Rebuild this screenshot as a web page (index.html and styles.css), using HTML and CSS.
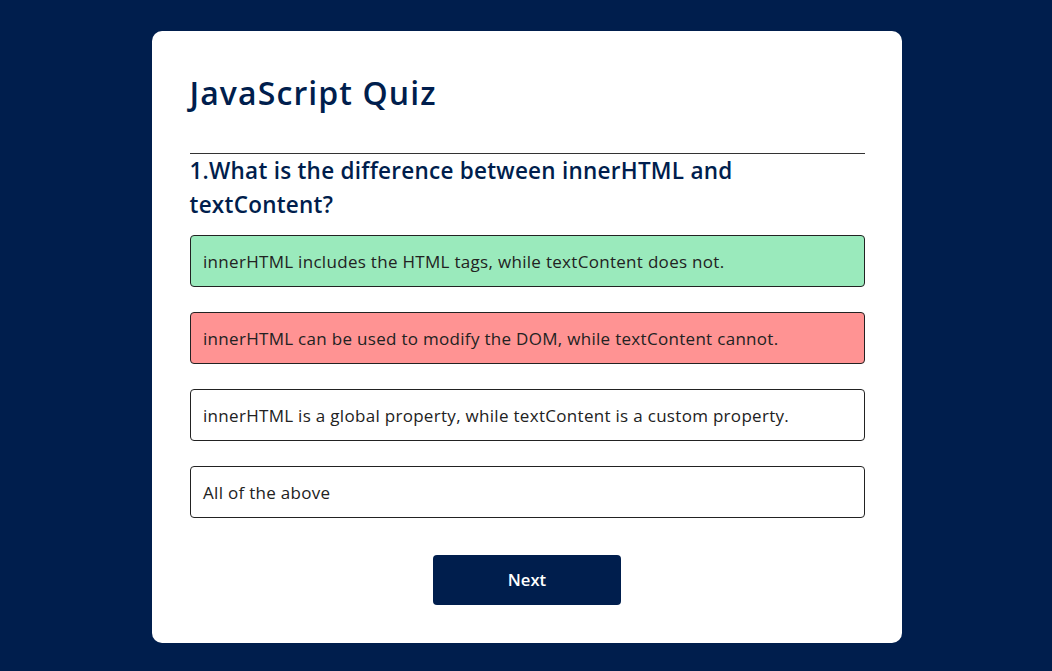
FILE: index.html
```html
<!DOCTYPE html>
<html lang="en">
<head>
<meta charset="utf-8">
<title>JavaScript Quiz</title>
<link rel="stylesheet" href="styles.css">
</head>
<body>
<div class="app">
  <h1 class="title">JavaScript Quiz</h1>
  <div class="quiz">
    <h2 class="question">1.What is the difference between innerHTML and textContent?</h2>
    <div class="answers">
      <button class="btn correct">innerHTML includes the HTML tags, while textContent does not.</button>
      <button class="btn incorrect">innerHTML can be used to modify the DOM, while textContent cannot.</button>
      <button class="btn">innerHTML is a global property, while textContent is a custom property.</button>
      <button class="btn">All of the above</button>
    </div>
    <button class="next-btn">Next</button>
  </div>
</div>
</body>
</html>
```
FILE: styles.css
```css
* { box-sizing: border-box; }
body {
  margin: 0;
  padding-left: 2px;
  background: #001e4d;
  font-family: "Open Sans", "Noto Sans", sans-serif;
}
.app {
  width: 750px;
  margin: 31px auto 0;
  background: #fff;
  border-radius: 10px;
  padding: 37.5px 37.5px 38.5px;
}
.title {
  margin: 0;
  font-size: 32px;
  letter-spacing: 1.1px;
  line-height: 47px;
  font-weight: 600;
  color: #001e4d;
  padding-bottom: 37.5px;
  border-bottom: 1px solid #333;
}
.quiz {
  display: flex;
  flex-direction: column;
}
.question {
  margin: 0;
  font-size: 22.5px;
  letter-spacing: 0.25px;
  line-height: 34.25px;
  font-weight: 600;
  color: #001e4d;
}
.answers {
  display: flex;
  flex-direction: column;
  gap: 25px;
  margin: 12.5px 0;
}
.btn {
  display: block;
  width: 100%;
  background: #fff;
  color: #222;
  font-family: inherit;
  font-size: 17px;
  letter-spacing: 0.3px;
  line-height: 25px;
  font-weight: 500;
  text-align: left;
  border: 1px solid #222;
  border-radius: 4px;
  padding: 12.5px 12.5px;
  height: 52px;
}
.btn.correct { background: #9aeabc; }
.btn.incorrect { background: #ff9393; }
.next-btn {
  align-self: center;
  width: 188px;
  height: 50px;
  margin-top: 24px;
  background: #001e4d;
  color: #fff;
  font-family: inherit;
  font-size: 16.67px;
  font-weight: 600;
  border: 0;
  border-radius: 4px;
}
```
